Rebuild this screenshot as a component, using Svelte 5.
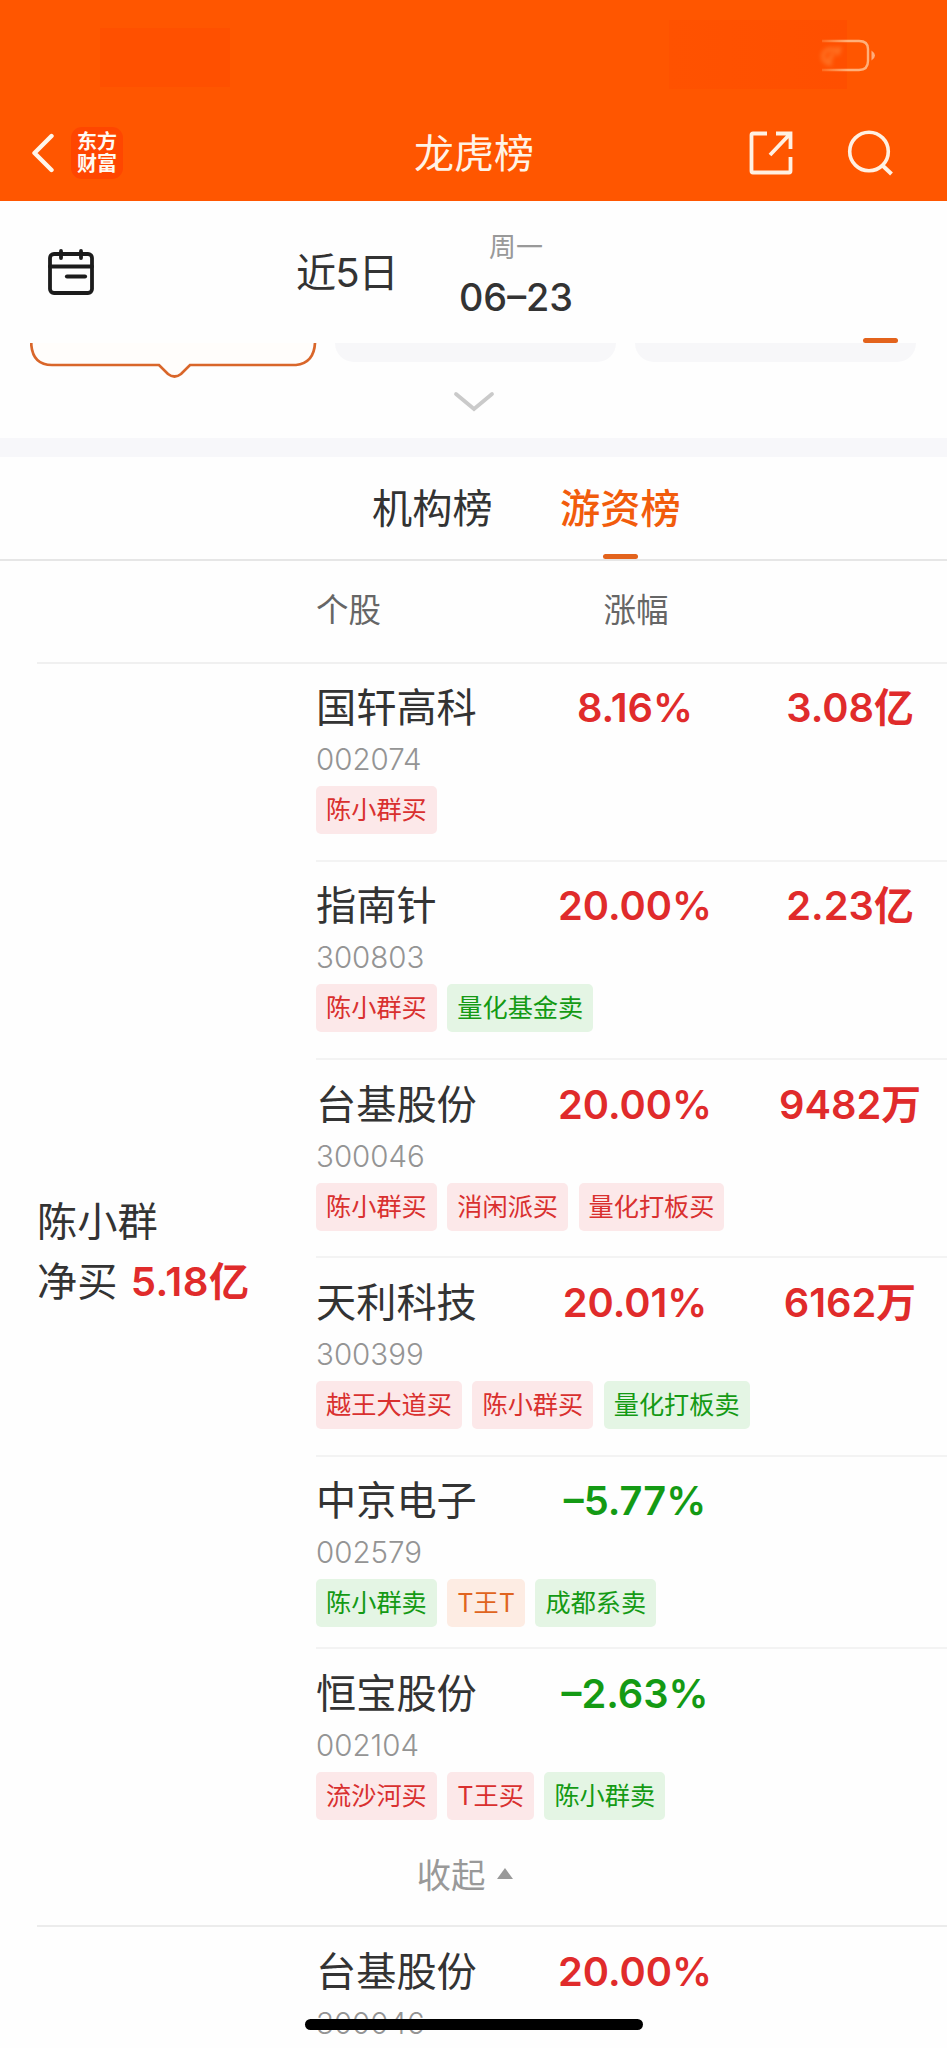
<script>
  const tabs = [
    { name: '机构榜', active: false },
    { name: '游资榜', active: true }
  ];

  const groups = [
    {
      trader: '陈小群',
      net: '5.18亿',
      stocks: [
        { name: '国轩高科', code: '002074', change: '8.16%', amount: '3.08亿', tags: [['陈小群买', 'buy']] },
        { name: '指南针', code: '300803', change: '20.00%', amount: '2.23亿', tags: [['陈小群买', 'buy'], ['量化基金卖', 'sell']] },
        { name: '台基股份', code: '300046', change: '20.00%', amount: '9482万', tags: [['陈小群买', 'buy'], ['消闲派买', 'buy'], ['量化打板买', 'buy']] },
        { name: '天利科技', code: '300399', change: '20.01%', amount: '6162万', tags: [['越王大道买', 'buy'], ['陈小群买', 'buy'], ['量化打板卖', 'sell']] },
        { name: '中京电子', code: '002579', change: '–5.77%', amount: '', tags: [['陈小群卖', 'sell'], ['T王T', 'both'], ['成都系卖', 'sell']] },
        { name: '恒宝股份', code: '002104', change: '–2.63%', amount: '', tags: [['流沙河买', 'buy'], ['T王买', 'buy'], ['陈小群卖', 'sell']] }
      ]
    },
    {
      trader: '',
      net: '',
      stocks: [{ name: '台基股份', code: '300046', change: '20.00%', amount: '', tags: [] }]
    }
  ];
</script>

<div class="screen">
  <header>
    <div class="status">
      <span class="clock"></span>
      <span class="signals"></span>
      <svg class="battery" width="66" height="36" viewBox="0 0 66 36" fill="none">
        <defs>
          <linearGradient id="fade" gradientUnits="userSpaceOnUse" x1="0" y1="0" x2="36" y2="0">
            <stop offset="0" stop-color="#ffb36b" stop-opacity="0" />
            <stop offset="1" stop-color="#ffb07a" />
          </linearGradient>
        </defs>
        <path d="M10 4H47Q56 4 56 12V24Q56 33 47 33H10" stroke="url(#fade)" stroke-width="2.4" />
        <path d="M59.500 13.500Q63 16 63 18.500Q63 21 59.500 23.500Z" fill="#ffad7c" />
        <path class="smudge" d="M25 13Q12 10 11 19Q11 26 20 27M21 16L17 24M28 10L25 18" stroke="#ff8a3d" stroke-width="4" />
      </svg>
    </div>
    <nav>
      <svg class="back" width="24" height="40" viewBox="0 0 24 40" fill="none" stroke="#fff6ea" stroke-width="4.400" stroke-linecap="round" stroke-linejoin="round">
        <path d="M21.500 3L4.500 20L21.500 37" />
      </svg>
      <div class="logo">东方<br />财富</div>
      <h1>龙虎榜</h1>
      <svg class="share" width="44" height="44" viewBox="0 0 44 44" fill="none" stroke="#fff0e2" stroke-width="3.800">
        <path d="M18 2.500H4Q2.500 2.500 2.500 4V40Q2.500 41.500 4 41.500H40Q41.500 41.500 41.500 40V26" />
        <path d="M27 2.500H41.500V18M41 3L21 24" />
      </svg>
      <svg class="search" width="46" height="46" viewBox="0 0 46 46" fill="none" stroke="#fff0e2" stroke-width="3.600">
        <circle cx="22" cy="21.500" r="19.300" />
        <path d="M35 35L44.500 44" stroke-width="4" />
      </svg>
    </nav>
  </header>

  <section class="dates">
    <svg class="calendar" width="46" height="46" viewBox="0 0 46 46" fill="none" stroke="#1c1c1c" stroke-width="3.800" stroke-linecap="round">
      <rect x="2" y="5" width="42" height="39" rx="4" />
      <path d="M2 17.500H44M13 2V9M33 2V9" />
      <path d="M19 27.500H37" stroke-width="4.200" />
    </svg>
    <span class="range">近5日</span>
    <div class="day">
      <small>周一</small>
      <b>06–23</b>
    </div>
    <i class="marker"></i>
  </section>

  <section class="cards">
    <svg class="picked" width="288" height="38" viewBox="0 0 288 38">
      <path d="M1.300 0V2Q3 22 22 22H129L138 31Q144.500 36 151 31L160 22H266Q284 20 285 0" fill="#fffdfb" stroke="#d9662a" stroke-width="2.700" />
    </svg>
    <div class="card"></div>
    <div class="card"></div>
  </section>

  <div class="expand">
    <svg width="42" height="24" viewBox="0 0 42 24" fill="none" stroke="#cacaca" stroke-width="3.800" stroke-linecap="round">
      <path d="M3 3L21 18L39 3" />
    </svg>
  </div>

  <div class="band"></div>

  <div class="tabs">
    {#each tabs as tab}
      <span class="tab" class:active={tab.active}>{tab.name}</span>
    {/each}
  </div>

  <div class="columns">
    <span></span>
    <span>个股</span>
    <span class="mid">涨幅</span>
    <span></span>
  </div>

  {#each groups as group}
    <div class="group">
      <div class="body">
        <div class="trader">
          {#if group.trader}
            <div>{group.trader}</div>
            <div>净买 <b>{group.net}</b></div>
          {/if}
        </div>
        <div class="stocks">
          {#each group.stocks as stock}
            <div class="stock" class:plain={!stock.amount}>
              <div class="line">
                <span class="name">{stock.name}</span>
                <span class="num" class:down={stock.change.startsWith('–')}>{stock.change}</span>
                <span class="num">{stock.amount}</span>
              </div>
              <div class="code">{stock.code}</div>
              <div class="tags">
                {#each stock.tags as [label, kind]}
                  <span class="tag {kind}">{label}</span>
                {/each}
              </div>
            </div>
          {/each}
        </div>
      </div>
      {#if group.trader}
        <div class="collapse">
          收起
          <svg width="16" height="11" viewBox="0 0 16 11"><path d="M8 0L16 11H0Z" fill="#999" /></svg>
        </div>
      {/if}
    </div>
  {/each}

  <div class="home-bar"></div>
</div>

<style>
  :global(body) {
    margin: 0;
    background: #fefefe;
  }

  .screen {
    position: relative;
    width: 947px;
    height: 2048px;
    overflow: hidden;
    background: #fefefe;
    color: #333;
    font-family: Inter, 'Noto Sans CJK SC', sans-serif;
    font-size: 40.200px;
  }
  .screen * {
    box-sizing: border-box;
  }
  svg {
    display: block;
    flex: none;
  }

  header {
    height: 201px;
    background: #ff5600;
  }
  .status {
    display: flex;
    height: 105px;
    padding: 20px 0 0 100px;
  }
  .clock {
    width: 130px;
    height: 59px;
    margin-top: 8px;
    background: #ff5000;
  }
  .signals {
    width: 178px;
    height: 69px;
    margin-left: 439px;
    background: linear-gradient(90deg, #ff5200, #ff4f00);
  }
  .battery {
    margin: 17px 0 0 -35px;
  }
  .smudge {
    filter: blur(2px);
    opacity: 0.6;
  }
  nav {
    display: flex;
    align-items: center;
    height: 96px;
    padding: 0 54px 0 30px;
  }
  .logo {
    width: 52px;
    height: 52px;
    margin-left: 17px;
    padding-top: 4px;
    border-radius: 11px;
    background: #ff4600;
    color: #fffaf2;
    font-size: 20px;
    font-weight: 700;
    line-height: 22px;
    text-align: center;
  }
  h1 {
    flex: 1;
    margin: 0;
    padding: 1px 0 0 76px;
    color: #fff3e6;
    font-size: 40px;
    font-weight: 400;
    line-height: 60px;
    text-align: center;
  }
  .search {
    margin-left: 54px;
  }

  .dates {
    display: flex;
    height: 142px;
    padding-left: 48px;
  }
  .calendar {
    margin-top: 48px;
  }
  .range {
    width: 98px;
    margin: 42px 0 0 202px;
    letter-spacing: -1px;
    line-height: 60px;
    white-space: nowrap;
  }
  .day {
    width: 130px;
    margin: 27px 0 0 57px;
    text-align: center;
  }
  .day small {
    display: block;
    color: #999;
    font-size: 27px;
    line-height: 40px;
  }
  .day b {
    display: block;
    font-size: 37.800px;
    font-weight: 500;
    line-height: 58px;
  }
  .marker {
    width: 35px;
    height: 5px;
    margin: 137px 0 0 282px;
    border-radius: 3px;
    background: #e3631c;
  }

  .cards {
    display: flex;
    height: 38px;
    padding-left: 30px;
  }
  .card {
    width: 281px;
    height: 19px;
    margin-left: 17px;
    border-radius: 0 0 22px 22px;
    background: #f7f7f9;
  }
  .card + .card {
    margin-left: 19px;
  }
  .expand {
    display: flex;
    justify-content: center;
    height: 57px;
    padding-top: 10px;
  }
  .band {
    height: 19px;
    background: #f7f7fa;
  }

  .tabs {
    display: flex;
    gap: 67px;
    height: 104px;
    padding-left: 372px;
    border-bottom: 2px solid #e6e6e6;
  }
  .tab {
    width: 121px;
    padding-top: 22px;
    line-height: 60px;
  }
  .tab.active {
    color: #f25c0c;
    font-weight: 500;
  }
  .tab.active::after {
    content: '';
    display: block;
    width: 35px;
    height: 5px;
    margin: 15px auto 0;
    border-radius: 3px;
    background: #e3631c;
  }

  .columns {
    display: grid;
    grid-template-columns: 279px 214px 212px 1fr;
    height: 102.500px;
    margin-left: 37px;
    padding-top: 25px;
    border-bottom: 2px solid #f0f0f0;
    color: #666;
    font-size: 32.5px;
    line-height: 50px;
  }
  .mid {
    text-align: center;
  }

  .group {
    margin-left: 37px;
    border-bottom: 2px solid #ececec;
  }
  .body {
    display: flex;
  }
  .trader {
    display: flex;
    flex: none;
    flex-direction: column;
    justify-content: center;
    width: 279px;
    padding-top: 1px;
    line-height: 60px;
  }
  .trader b {
    margin-left: 2px;
    color: #e02b2b;
    font-weight: 600;
    letter-spacing: 0.5px;
  }
  .stocks {
    flex: 1;
    min-width: 0;
  }
  .stock {
    height: 198.300px;
    padding-top: 14.500px;
    border-bottom: 2px solid #f3f3f3;
  }
  .stock.plain {
    height: 192.500px;
  }
  .stock:last-child {
    height: 190px;
    border-bottom: 0;
  }
  .line {
    display: grid;
    grid-template-columns: 214px 210px 220px;
    height: 60px;
    line-height: 60px;
  }
  .num {
    color: #e02b2b;
    font-size: 39.800px;
    font-weight: 600;
    text-align: center;
  }
  .num.down {
    color: #149a14;
  }
  .code {
    height: 48px;
    color: #949494;
    font-size: 29.5px;
    font-weight: 300;
    line-height: 43px;
  }
  .tags {
    display: flex;
    gap: 10.500px;
  }
  .tag {
    height: 48px;
    padding: 0 10px;
    border-radius: 5px;
    font-size: 25.200px;
    line-height: 49px;
  }
  .buy {
    background: #fce8e9;
    color: #d9302f;
  }
  .sell {
    background: #e4f5e4;
    color: #149a14;
  }
  .both {
    background: #fdece3;
    color: #e06420;
  }

  .collapse {
    display: flex;
    justify-content: center;
    align-items: center;
    gap: 11px;
    height: 86px;
    padding: 0 55px 18px 0;
    color: #999;
    font-size: 34.500px;
  }

  .home-bar {
    position: absolute;
    left: 305px;
    bottom: 18px;
    width: 338px;
    height: 11px;
    border-radius: 6px;
    background: #000;
  }
</style>
